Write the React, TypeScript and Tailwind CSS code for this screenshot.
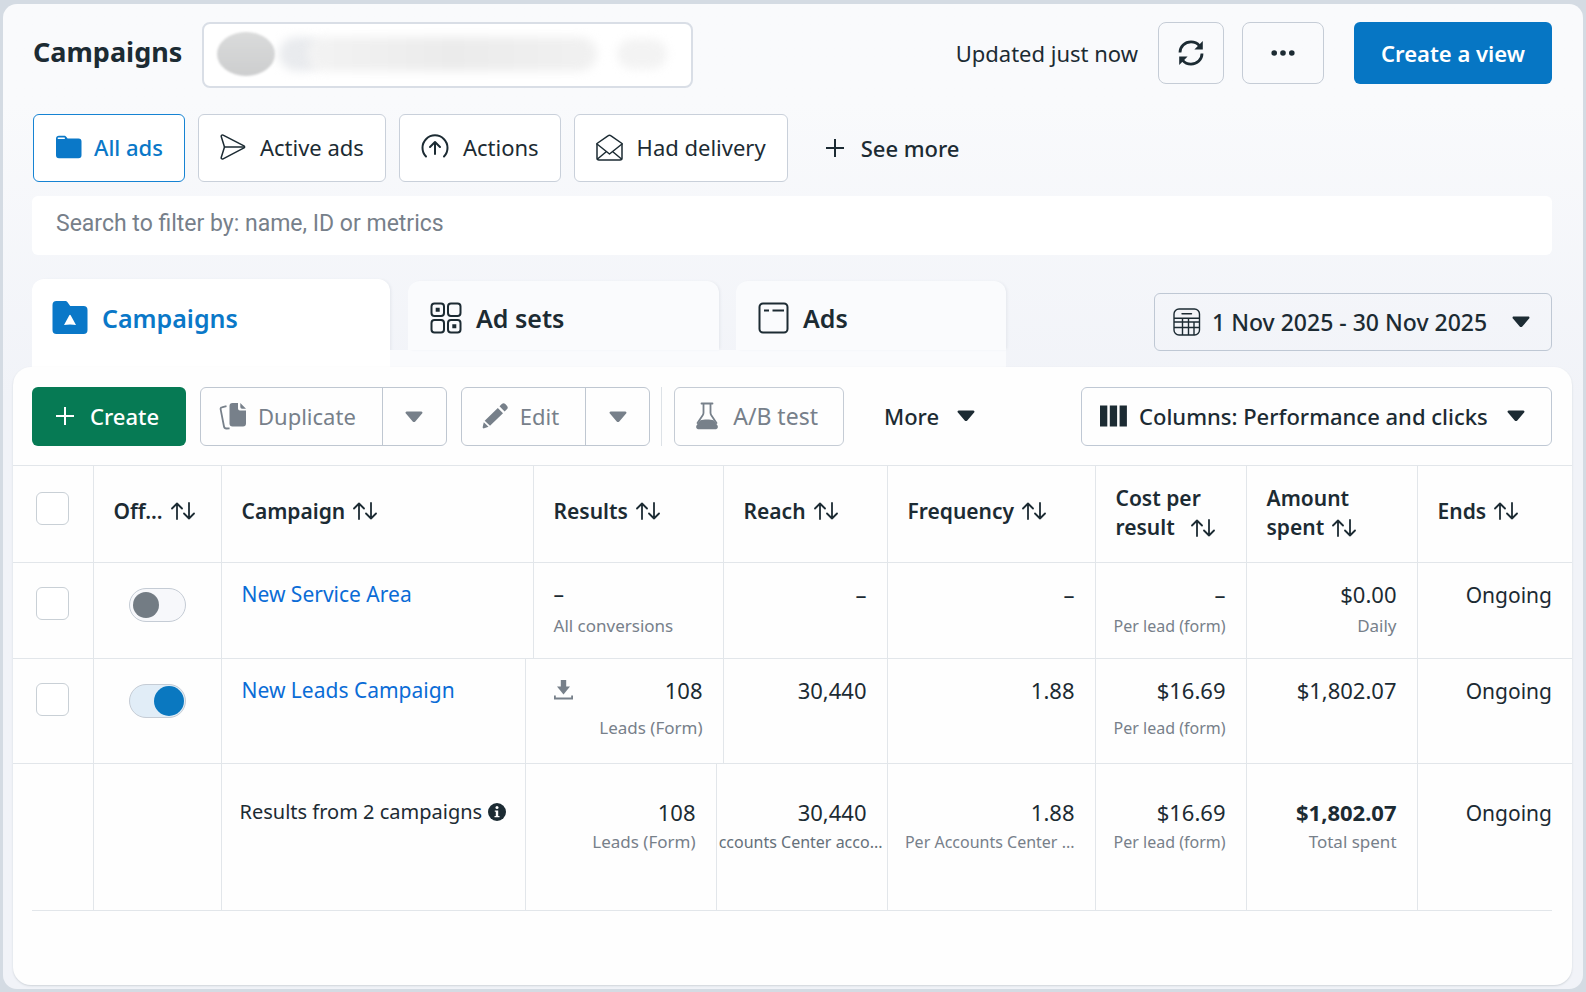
import { useState } from 'react';
import type { ReactNode } from 'react';

// ==========================================
// ICONS
// ==========================================
type IconProps = { className?: string };

const FolderIcon = () => (
  <svg width="27" height="24" viewBox="0 0 27 24" fill="none">
    <path d="M1 3.5A3 3 0 0 1 4 .8h5.2c1 0 1.500.4 2.200 1.200L12.600 3.500H23.500a3 3 0 0 1 3 3v13.800a3 3 0 0 1-3 3H4a3 3 0 0 1-3-3z" fill="#0a78c8" />
    <path d="M3.300 3.300h6" stroke="#fff" strokeWidth="1.400" strokeLinecap="round" />
  </svg>
);

const SendIcon = () => (
  <svg width="26" height="26" viewBox="0 0 26 26" fill="none" stroke="#1c2b33" strokeWidth="1.500" strokeLinejoin="round" strokeLinecap="round">
    <path d="M3.100 1.200 24 11.900c.8.500.8 1.500 0 2L3.100 24.800c-1.200.6-2.200-.3-1.800-1.500L4.500 13 1.300 2.700C.9 1.500 1.900.6 3.100 1.200z" />
    <path d="M4.500 13h19.500" />
  </svg>
);

const ActionsIcon = () => (
  <svg width="28" height="26" viewBox="0 0 28 26" fill="none" stroke="#1c2b33" strokeWidth="2" strokeLinecap="round" strokeLinejoin="round">
    <path d="M5 22.500a12.500 12.500 0 1 1 18 0" />
    <path d="M14 20V8.500M9 13l5-5 5 5" />
  </svg>
);

const MailIcon = () => (
  <svg width="27" height="27" viewBox="0 0 27 27" fill="none" stroke="#1c2b33" strokeWidth="1.500" strokeLinejoin="round" strokeLinecap="round">
    <path d="M1 9.500 12.300 1.600a2 2 0 0 1 2.400 0L26 9.500V24a2 2 0 0 1-2 2H3a2 2 0 0 1-2-2z" />
    <path d="m1 10 10 8 2.500 2 2.500-2L26 10M1.500 25l9-7.500M25.500 25l-9-7.500" />
  </svg>
);

const PlusIcon = ({ className }: IconProps) => (
  <svg className={className} width="20" height="20" viewBox="0 0 20 20" fill="none" stroke="currentColor" strokeWidth="2">
    <path d="M10 1v18M1 10h18" />
  </svg>
);

const RefreshIcon = () => (
  <svg width="28" height="28" viewBox="0 0 28 28" fill="none">
    <path d="M3 13.500C3 7.500 7.800 2.900 14 2.900c3.400 0 6.300 1.300 8.300 3.700M25 14.500c0 6-4.800 10.600-11 10.600-3.400 0-6.300-1.300-8.300-3.700" stroke="#1c2b33" strokeWidth="2.800" />
    <path d="M25.800 2v8.600h-8.400zM2.200 26v-8.600h8.400z" fill="#1c2b33" />
  </svg>
);

const DotsIcon = () => (
  <svg width="24" height="6" viewBox="0 0 24 6" fill="#1c2b33">
    <circle cx="3.200" cy="3" r="2.800" />
    <circle cx="12" cy="3" r="2.800" />
    <circle cx="20.800" cy="3" r="2.800" />
  </svg>
);

const CampaignFolderIcon = () => (
  <svg width="36" height="34" viewBox="0 0 36 34">
    <path d="M.5 4a4 4 0 0 1 4-4h8.300c1.200 0 2.200.5 2.900 1.400L18.200 5H31.500a4 4 0 0 1 4 4v20a4 4 0 0 1-4 4h-27a4 4 0 0 1-4-4z" fill="#0a78c8" />
    <path d="M17.200 14.400c.4-.8 1.200-.8 1.600 0l5.200 9.600c-3.500-.8-8.500-.8-12 0z" fill="#fff" />
  </svg>
);

const AdSetsIcon = () => (
  <svg width="32" height="32" viewBox="0 0 32 32" fill="none" stroke="#1c2b33" strokeWidth="2">
    <rect x="1.500" y="1.500" width="12.500" height="12.500" rx="3" />
    <rect x="18" y="1.500" width="12.500" height="12.500" rx="3" />
    <rect x="1.500" y="18" width="12.500" height="12.500" rx="3" />
    <rect x="18" y="18" width="12.500" height="12.500" rx="3" />
    <path d="M5.700 7.700h4M22.300 24.300h4" strokeWidth="4" />
  </svg>
);

const AdsIcon = () => (
  <svg width="31" height="32" viewBox="0 0 31 32" fill="none" stroke="#1c2b33" strokeWidth="2">
    <rect x="1.500" y="1.500" width="28" height="29" rx="3.500" />
    <path d="M6 8.500h5M14.500 8.500h11.500" />
  </svg>
);

const CalendarIcon = () => (
  <svg className="shrink-0" width="28" height="28" viewBox="0 0 28 28" fill="none" stroke="#1c2b33" strokeWidth="1.400">
    <rect x="1" y="1" width="25.500" height="26" rx="5" />
    <path d="M9 5.700h9.500" strokeLinecap="round" />
    <path d="M1 10.300h25.500M1 14h25.500M1 19.500h25.500M9.500 10.300V27M15.500 10.300V27M21 14V27" />
  </svg>
);

const ColumnsIcon = () => (
  <svg className="shrink-0" width="27" height="22" viewBox="0 0 27 22" fill="#1c2b33">
    <path d="M0 .5h7.300v21H0zM9.800.5h7.300v21H9.800zM19.600.5h7.300v21h-7.300z" />
  </svg>
);

const Caret = ({ className }: IconProps) => (
  <svg className={className} width="18" height="12" viewBox="0 0 18 12" fill="currentColor">
    <path d="M1.800.5h14.400c1.200 0 1.700 1.300.9 2.100L10.300 10.400c-.8.900-1.800.9-2.600 0L.9 2.600C.1 1.800.6.5 1.800.5z" />
  </svg>
);

const DuplicateIcon = () => (
  <svg width="28" height="28" viewBox="0 0 28 28" fill="none">
    <path d="M13.500 1H19v5.500a2 2 0 0 0 2 2h6v13a3 3 0 0 1-3 3H13.500a3 3 0 0 1-3-3V4a3 3 0 0 1 3-3z" fill="#77808a" />
    <path d="M21.300 1 27 6.700h-4a1.700 1.700 0 0 1-1.700-1.700z" fill="#77808a" />
    <path d="M7.500 4.200 2.800 5.300a1.500 1.500 0 0 0-1.200 1.800L5 24.500a2.500 2.500 0 0 0 2.600 2l3-.2" stroke="#77808a" strokeWidth="1.800" />
  </svg>
);

const PencilIcon = () => (
  <svg width="29" height="26" viewBox="-2 0 29 26" fill="#77808a">
    <path d="m17.500 3.300 2.300-2.200a2.500 2.500 0 0 1 3.500 0l1.600 1.600a2.500 2.500 0 0 1 0 3.500L22.600 8.500zM15.800 5l5.200 5.200L8 22.700l-5.300-4.900z" />
    <path d="m1.800 19.300 4.700 4.400L2.200 25.300c-1 .3-1.700-.3-1.500-1.300z" />
  </svg>
);

const FlaskIcon = () => (
  <svg width="24" height="28" viewBox="0 0 24 28" fill="none">
    <path d="M6.500 1.500h11M8.500 1.500v9.200c0 1-.3 1.800-.8 2.600L2.500 21M15.500 1.500v9.200c0 1 .3 1.800.8 2.600l5.200 7.700" stroke="#77808a" strokeWidth="1.800" strokeLinecap="round" />
    <path d="M5 18.500c4-1.300 10-1.300 14 0l3.500 5c1 2-.2 3.800-2.300 3.800H3.800c-2.100 0-3.300-1.800-2.300-3.800z" fill="#77808a" />
  </svg>
);

const SortIcon = () => (
  <svg className="inline-block shrink-0" width="24" height="18" viewBox="0 0 24 18" fill="none" stroke="#1c2b33" strokeWidth="1.800" strokeLinecap="round" strokeLinejoin="round">
    <path d="M6 17V1.500M1 6.500l5-5 5 5M18 1v15.500M13 11.500l5 5 5-5" />
  </svg>
);

const DownloadIcon = () => (
  <svg width="19" height="20" viewBox="0 0 19 20" fill="#77808a">
    <path d="M6.800 0h5.400v6.500H16L9.500 14.500 3 6.500h3.800z" />
    <path d="M.9 15.500v3h17.200v-3" fill="none" stroke="#77808a" strokeWidth="1.800" />
  </svg>
);

const InfoIcon = () => (
  <svg className="shrink-0" width="18" height="18" viewBox="0 0 18 18">
    <circle cx="9" cy="9" r="9" fill="#1c2b33" />
    <circle cx="9" cy="4.600" r="1.500" fill="#fff" />
    <path d="M6.800 7.500h3.400v5.500h1.300v1.300H6.500V13h1.300V8.800h-1z" fill="#fff" />
  </svg>
);

// ==========================================
// SMALL PARTS
// ==========================================
const FilterPill = ({ icon, label, active }: { icon: ReactNode; label: string; active?: boolean }) => (
  <button
    className={
      active
        ? 'flex h-[68px] items-center gap-3 rounded-md border border-[#1683d3] bg-white px-[21px] pb-[2px] font-medium text-[#0a78c8]'
        : 'flex h-[68px] items-center gap-[14px] rounded-md border border-[#c9d0da] bg-white px-[21px] pb-[2px] text-[#1c2b33]'
    }
  >
    {icon}
    {label}
  </button>
);

const SplitButton = ({ icon, label }: { icon: ReactNode; label: string }) => (
  <div className="flex h-[59px] rounded-md border border-[#bfc7d1] text-[#77808a]">
    <button className="flex items-center gap-[11px] border-r border-[#bfc7d1] pr-[26px] pb-[2px] pl-[18px]">
      {icon}
      {label}
    </button>
    <button className="flex w-[63px] items-center justify-center" aria-label={`${label} options`}>
      <Caret />
    </button>
  </div>
);

const RowCheckbox = ({ label }: { label: string }) => (
  <input
    type="checkbox"
    aria-label={label}
    className="block size-[33px] appearance-none rounded-md border border-[#c9d0d6] bg-white checked:bg-[#0a78c8]"
  />
);

const Toggle = ({ label, on }: { label: string; on: boolean }) => {
  const [checked, setChecked] = useState(on);
  return (
    <input
      type="checkbox"
      role="switch"
      aria-label={label}
      checked={checked}
      onChange={() => setChecked(!checked)}
      className="mx-auto flex h-[34px] w-[57px] appearance-none items-center rounded-full border border-[#c5ccd5] bg-[#f7f8fb] px-[3px] before:size-[26px] before:rounded-full before:bg-[#737c84] checked:justify-end checked:bg-[#e1edf7] checked:px-px checked:before:size-[30px] checked:before:bg-[#0a78c0]"
    />
  );
};

const SortHead = ({ label, span }: { label: string; span?: number }) => (
  <th colSpan={span} className="border-r border-[#e2e6ea] px-5 pb-[7px] text-left font-semibold last:border-r-0">
    <span className="flex items-center gap-2">
      {label} <SortIcon />
    </span>
  </th>
);

type CellProps = { children?: ReactNode; sub?: string; span?: number; subClass?: string };

const Cell = ({ children, sub, span, subClass }: CellProps) => (
  <td colSpan={span} className="border-r border-[#e2e6ea] pr-5 text-right align-top text-[22px] whitespace-nowrap last:border-r-0">
    {children}
    {sub && <div className={`leading-6 text-[#77808a] ${subClass ?? 'mt-[6px] text-[17px]'}`}>{sub}</div>}
  </td>
);

const side = 'border-r border-[#e2e6ea] align-top';

export default function App() {
  return (
    <div className="flex min-h-screen bg-[#d4dbe3] px-[3px] pt-1 pb-[3px] font-['Noto_Sans','Liberation_Sans',sans-serif] text-[22px] leading-7 text-[#1c2b33]">
      <main className="flex flex-1 flex-col rounded-[14px] bg-linear-to-b from-[#f9fafc] from-10% to-[#f1f3f8] to-40% pr-[11px] pb-1 pl-[10px]">
        {/* Header */}
        <header className="flex items-start pt-[18px] pr-5 pl-[20px]">
          <h1 className="mr-5 text-[27px] leading-[60px] font-bold">Campaigns</h1>
          <button aria-label="Account" className="flex h-[66px] w-[491px] items-center overflow-hidden rounded-lg border-2 border-[#d9dee6] bg-white pb-[2px] pl-[13px]">
            <span className="h-[44px] w-[58px] rounded-[50%] bg-linear-to-b from-[#dadbdb] to-[#cdcecf] blur-[1px]" />
            <span className="ml-1 h-[34px] w-[44px] rounded-full bg-[#e9ebee] blur-[5px]" />
            <span className="-ml-4 h-[34px] w-[290px] rounded-full bg-linear-to-r from-[#f3f3f3] via-[#ebebeb] via-50% to-[#f1f1f1] blur-[5px]" />
            <span className="ml-5 h-[30px] w-[50px] rounded-full bg-[#f3f3f3] blur-[5px]" />
          </button>
          <span className="ml-auto leading-[62px]">Updated just now</span>
          <button aria-label="Refresh" className="ml-5 flex h-[62px] w-[66px] items-center justify-center rounded-lg border border-[#c5ccd6]">
            <RefreshIcon />
          </button>
          <button aria-label="More options" className="ml-[18px] flex h-[62px] w-[82px] items-center justify-center rounded-lg border border-[#c5ccd6]">
            <DotsIcon />
          </button>
          <button className="ml-[30px] h-[62px] w-[198px] rounded-md bg-[#0676c4] font-semibold text-white">Create a view</button>
        </header>

        {/* Quick filters */}
        <div className="mt-[26px] flex items-center gap-[13px] pl-5">
          <FilterPill icon={<FolderIcon />} label="All ads" active />
          <FilterPill icon={<SendIcon />} label="Active ads" />
          <FilterPill icon={<ActionsIcon />} label="Actions" />
          <FilterPill icon={<MailIcon />} label="Had delivery" />
          <button className="ml-6 flex items-center gap-4 font-medium">
            <PlusIcon />
            See more
          </button>
        </div>

        <input
          type="search"
          aria-label="Search campaigns"
          placeholder="Search to filter by: name, ID or metrics"
          className="mt-[14px] mr-5 ml-[19px] h-[59px] rounded-md bg-white px-6 pb-1 font-['Roboto',sans-serif] text-[23px] placeholder:text-[#77808a]"
        />

        {/* Level tabs + date range */}
        <div className="mt-6 flex pr-5 pl-[19px]">
          <div role="tablist" className="flex text-[25px] font-semibold">
            <button role="tab" aria-selected="true" className="flex h-[88px] w-[358px] items-start gap-[14px] rounded-t-xl bg-white pt-[22px] pl-5 leading-[34px] text-[#0a78c8] shadow-[2px_0_3px_-1px_#e3e6ec]">
              <CampaignFolderIcon />
              Campaigns
            </button>
            <div className="pt-[2px]">
              <div className="flex gap-[17px] pl-[18px]">
                <button role="tab" aria-selected="false" className="flex h-[69px] w-[311px] items-center gap-[14px] rounded-t-xl bg-[#fafbfd] pt-[10px] pb-[6px] pl-[22px] shadow-[2px_0_3px_-1px_#e3e6ec]">
                  <AdSetsIcon />
                  Ad sets
                </button>
                <button role="tab" aria-selected="false" className="flex h-[69px] w-[270px] items-center gap-[14px] rounded-t-xl bg-[#fafbfd] pt-[10px] pb-[6px] pl-[22px] shadow-[2px_0_3px_-1px_#e3e6ec]">
                  <AdsIcon />
                  Ads
                </button>
              </div>
              <div className="h-[17px] bg-[#fafbfd]" />
            </div>
          </div>
          <label className="mt-[14px] ml-auto flex h-[58px] w-[398px] items-center rounded-md border border-[#bfc8d4] pr-[21px] pl-[18px] text-[23px] font-medium">
            <CalendarIcon />
            <select aria-label="Date range" className="min-w-0 flex-1 appearance-none pl-[11px]">
              <option>1 Nov 2025 - 30 Nov 2025</option>
            </select>
            <Caret />
          </label>
        </div>

        <section className="flex-1 rounded-[18px] bg-[#fefefe] shadow-[0_1px_2px_#cfd4da]">
          {/* Toolbar */}
          <div className="flex items-center pt-5 pr-5 pb-[19px] pl-[19px]">
            <button className="flex h-[59px] w-[154px] items-center justify-center gap-[15px] rounded-md bg-[#067a54] pr-1 pb-[2px] font-medium text-white">
              <PlusIcon />
              Create
            </button>
            <div className="ml-[14px] flex items-center gap-[14px]">
              <SplitButton icon={<DuplicateIcon />} label="Duplicate" />
              <SplitButton icon={<PencilIcon />} label="Edit" />
            </div>
            <div className="ml-[11px] h-[59px] w-px bg-[#dde2e7]" />
            <button className="ml-[12px] flex h-[59px] items-center gap-[14px] rounded-md border border-[#c5ccd5] pr-[25px] pb-[2px] pl-[20px] text-[23px] text-[#77808a]">
              <FlaskIcon />
              A/B test
            </button>
            <button className="ml-10 flex items-center gap-[18px] pb-[2px] font-medium">
              More
              <Caret />
            </button>
            <label className="ml-auto flex h-[59px] w-[471px] items-center rounded-md border border-[#bfc8d4] pr-[26px] pb-px pl-[18px] font-medium">
              <ColumnsIcon />
              <select aria-label="Columns" className="min-w-0 flex-1 appearance-none pl-3">
                <option>Columns: Performance and clicks</option>
              </select>
              <Caret />
            </label>
          </div>

          {/* The campaign and results columns are narrower in the lower rows,
              so two thin spare columns are spanned differently by each row */}
          <table className="w-full table-fixed border-collapse text-[21px]">
            <colgroup>
              <col className="w-[80px]" />
              <col className="w-[128px]" />
              <col className="w-[304px]" />
              <col className="w-[8px]" />
              <col className="w-[183px]" />
              <col className="w-[7px]" />
              <col className="w-[164px]" />
              <col className="w-[208px]" />
              <col className="w-[151px]" />
              <col className="w-[171px]" />
              <col className="w-[155px]" />
            </colgroup>
            <thead>
              <tr className="h-[97px] border-y border-[#e2e6ea]">
                <th className="border-r border-[#e2e6ea] pb-3 pl-[23px]">
                  <RowCheckbox label="Select all campaigns" />
                </th>
                <SortHead label="Off..." />
                <SortHead label="Campaign" span={2} />
                <SortHead label="Results" span={2} />
                <SortHead label="Reach" />
                <SortHead label="Frequency" />
                <th className="border-r border-[#e2e6ea] pb-[2px] pl-5 text-left leading-[29px] font-semibold">
                  Cost per
                  <span className="flex items-center gap-4">result <SortIcon /></span>
                </th>
                <th className="border-r border-[#e2e6ea] pb-[2px] pl-5 text-left leading-[29px] font-semibold">
                  Amount
                  <span className="flex items-center gap-2">spent <SortIcon /></span>
                </th>
                <SortHead label="Ends" />
              </tr>
            </thead>
            <tbody>
              <tr className="h-[96px] border-b border-[#e2e6ea] *:pt-[17px]">
                <td className={`${side} pl-[23px]`}>
                  <div className="pt-[7px]"><RowCheckbox label="Select New Service Area" /></div>
                </td>
                <td className={side}>
                  <div className="pt-[8px]"><Toggle label="New Service Area" on={false} /></div>
                </td>
                <td colSpan={2} className={`${side} pl-5`}>
                  <a href="#service-area" className="text-[#0a6cd6]">New Service Area</a>
                </td>
                <td colSpan={2} className={`${side} pl-5`}>
                  –
                  <div className="mt-[6px] text-[17px] leading-6 text-[#77808a]">All conversions</div>
                </td>
                <Cell>–</Cell>
                <Cell>–</Cell>
                <Cell sub="Per lead (form)" subClass="mt-[6px] text-[16px]">–</Cell>
                <Cell sub="Daily">$0.00</Cell>
                <Cell><span className="text-[21px]">Ongoing</span></Cell>
              </tr>
              <tr className="h-[105px] border-b border-[#e2e6ea] *:pt-[17px]">
                <td className={`${side} pl-[23px]`}>
                  <div className="pt-[7px]"><RowCheckbox label="Select New Leads Campaign" /></div>
                </td>
                <td className={side}>
                  <div className="pt-[8px]"><Toggle label="New Leads Campaign" on /></div>
                </td>
                <td className={`${side} pl-5`}>
                  <a href="#leads" className="text-[#0a6cd6]">New Leads Campaign</a>
                </td>
                <td colSpan={3} className={`${side} pr-5 pl-7 text-right text-[22px]`}>
                  <div className="flex items-center justify-between">
                    <DownloadIcon />
                    108
                  </div>
                  <div className="mt-3 text-[17px] leading-6 text-[#77808a]">Leads (Form)</div>
                </td>
                <Cell>30,440</Cell>
                <Cell>1.88</Cell>
                <Cell sub="Per lead (form)" subClass="mt-3 text-[16px]">$16.69</Cell>
                <Cell>$1,802.07</Cell>
                <Cell><span className="text-[21px]">Ongoing</span></Cell>
              </tr>
              <tr className="h-[146px] *:pt-[34px]">
                <td className={side} />
                <td className={side} />
                <td className={`${side} pl-[18px] text-[20px] whitespace-nowrap`}>
                  <span className="flex items-center gap-[6px]">
                    Results from 2 campaigns <InfoIcon />
                  </span>
                </td>
                <Cell span={2} sub="Leads (Form)" subClass="mt-1 text-[17px]">108</Cell>
                <td colSpan={2} className={`${side} text-right text-[22px]`}>
                  <div className="pr-5">30,440</div>
                  <div className="mt-1 pr-1 text-[16px] leading-6 whitespace-nowrap text-[#65707a]">
                    ccounts Center acco...
                  </div>
                </td>
                <Cell sub="Per Accounts Center ..." subClass="mt-1 text-[16px]">1.88</Cell>
                <Cell sub="Per lead (form)" subClass="mt-1 text-[16px]">$16.69</Cell>
                <Cell sub="Total spent" subClass="mt-1 text-[17px]"><b>$1,802.07</b></Cell>
                <Cell><span className="text-[21px]">Ongoing</span></Cell>
              </tr>
            </tbody>
          </table>
          <div className="mr-5 ml-[19px] h-px bg-[#e2e6ea]" />
        </section>
      </main>
    </div>
  );
}
